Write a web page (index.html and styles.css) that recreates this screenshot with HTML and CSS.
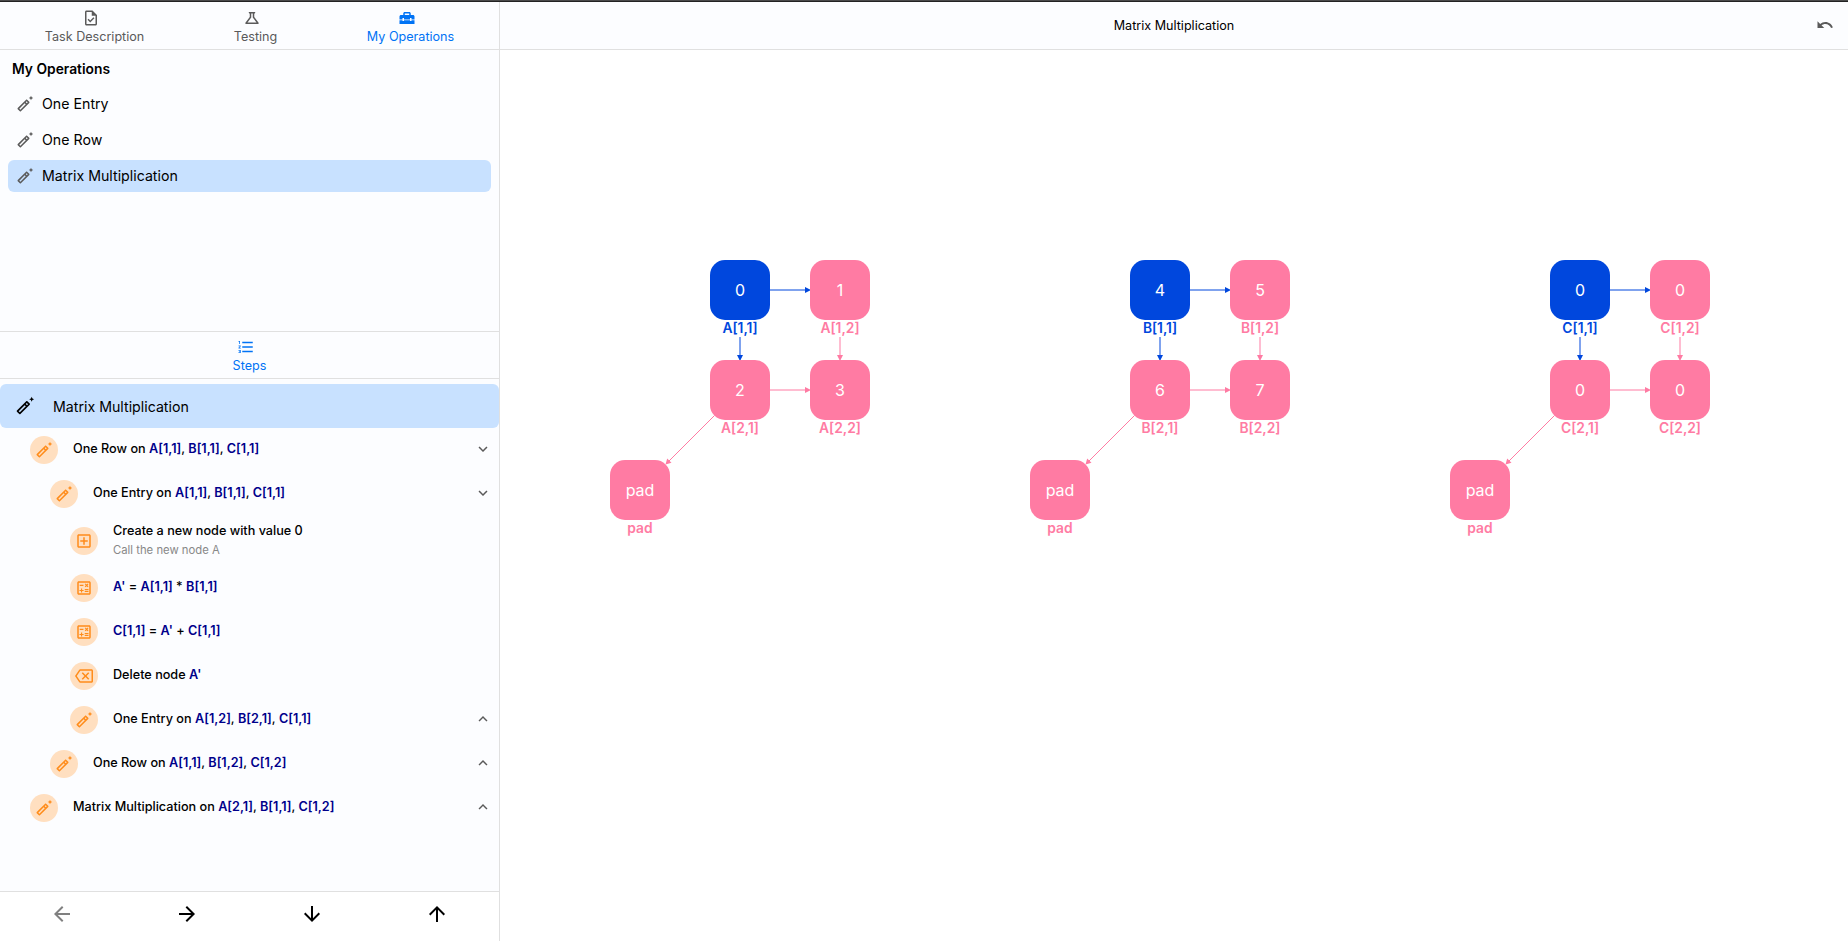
FILE: index.html
```
<!DOCTYPE html>
<html lang="en">
<head>
<meta charset="utf-8">
<title>Matrix Multiplication</title>
<link rel="stylesheet" href="styles.css">
</head>
<body>
<svg class="sprite" aria-hidden="true">
  <symbol id="task" viewBox="0 0 24 24"><path d="M14 2H6c-1.1 0-1.99.9-1.99 2L4 20c0 1.1.89 2 1.99 2H18c1.1 0 2-.9 2-2V8l-6-6zm4 18H6V4h7v5h5v11zm-9.18-6.95L7.4 14.46 10.94 18l5.66-5.66-1.41-1.41-4.24 4.24-2.13-2.12z"/></symbol>
  <symbol id="flask" viewBox="0 0 24 24"><path d="M13 11.33L18 18H6l5-6.67V6h2m2.96-2H8.04c-.42 0-.65.48-.39.81L9 6.5v4.17L3.2 18.4c-.49.66-.02 1.6.8 1.6h16c.82 0 1.29-.94.8-1.6L15 10.67V6.5l1.35-1.69c.26-.33.03-.81-.39-.81z"/></symbol>
  <symbol id="toolbox" viewBox="0 0 24 24"><path d="M18 16h-2v-1H8v1H6v-1H2v5h20v-5h-4v1zM20 8h-3V6c0-1.1-.9-2-2-2H9c-1.1 0-2 .9-2 2v2H4c-1.1 0-2 .9-2 2v4h4v-2h2v2h8v-2h2v2h4v-4c0-1.1-.9-2-2-2zm-5 0H9V6h6v2z"/></symbol>
  <symbol id="wand" viewBox="0 0 24 24"><path d="m20 7 .94-2.06L23 4l-2.06-.94L20 1l-.94 2.06L17 4l2.06.94zM17.71 9.12l-2.83-2.83C14.68 6.1 14.43 6 14.17 6c-.26 0-.51.1-.71.29L2.29 17.46c-.39.39-.39 1.02 0 1.41l2.83 2.83c.2.2.45.3.71.3s.51-.1.71-.29l11.17-11.17c.39-.39.39-1.03 0-1.42zm-3.54-.7 1.41 1.41L14.41 11 13 9.59l1.17-1.17zM5.83 19.59l-1.41-1.41L11.59 11 13 12.41l-7.17 7.18z"/></symbol>
  <symbol id="list" viewBox="0 0 24 24"><path d="M2 17h2v.5H3v1h1v.5H2v1h3v-4H2v1zm1-9h1V4H2v1h1v3zm-1 3h1.8L2 13.1v.9h3v-1H3.2L5 10.9V10H2v1zm5-6v2h14V5H7zm0 14h14v-2H7v2zm0-6h14v-2H7v2z"/></symbol>
  <symbol id="add" viewBox="0 0 24 24"><path d="M19 3H5c-1.11 0-2 .9-2 2v14c0 1.1.89 2 2 2h14c1.1 0 2-.9 2-2V5c0-1.1-.9-2-2-2zm0 16H5V5h14v14zm-8-2h2v-4h4v-2h-4V7h-2v4H7v2h4z"/></symbol>
  <symbol id="calc" viewBox="0 0 24 24"><path d="M19 3H5c-1.1 0-2 .9-2 2v14c0 1.1.9 2 2 2h14c1.1 0 2-.9 2-2V5c0-1.1-.9-2-2-2zm0 16H5V5h14v14z"/><path d="M6.25 7.72h5v1.5h-5zM13 15.75h5v1.5h-5zM13 13.25h5v1.5h-5zM8 18h1.5v-2h2v-1.5h-2v-2H8v2H6V16h2zM14.09 10.95l1.41-1.41 1.41 1.41 1.06-1.06-1.41-1.42 1.41-1.41L16.91 6 15.5 7.41 14.09 6l-1.06 1.06 1.41 1.41-1.41 1.42z"/></symbol>
  <symbol id="backspace" viewBox="0 0 24 24"><path d="M22 3H7c-.69 0-1.23.35-1.59.88L0 12l5.41 8.11c.36.53.9.89 1.59.89h15c1.1 0 2-.9 2-2V5c0-1.1-.9-2-2-2zm0 16H7.07L2.4 12l4.66-7H22v14zm-11.59-2L14 13.41 17.59 17 19 15.59 15.41 12 19 8.41 17.59 7 14 10.59 10.41 7 9 8.41 12.59 12 9 15.59z"/></symbol>
  <symbol id="more" viewBox="0 0 24 24"><path d="M16.59 8.59 12 13.17 7.41 8.59 6 10l6 6 6-6z"/></symbol>
  <symbol id="less" viewBox="0 0 24 24"><path d="m12 8-6 6 1.41 1.41L12 10.83l4.59 4.58L18 14z"/></symbol>
  <symbol id="undo" viewBox="0 0 24 24"><path d="M12.5 8c-2.65 0-5.05.99-6.9 2.6L2 7v9h9l-3.62-3.62c1.39-1.16 3.16-1.88 5.12-1.88 3.54 0 6.55 2.31 7.6 5.5l2.37-.78C21.08 11.03 17.15 8 12.5 8z"/></symbol>
  <symbol id="left" viewBox="0 0 24 24"><path d="M20 11H7.83l5.59-5.59L12 4l-8 8 8 8 1.41-1.41L7.83 13H20v-2z"/></symbol>
  <symbol id="right" viewBox="0 0 24 24"><path d="m12 4-1.41 1.41L16.17 11H4v2h12.17l-5.58 5.59L12 20l8-8z"/></symbol>
  <symbol id="down" viewBox="0 0 24 24"><path d="m20 12-1.41-1.41L13 16.17V4h-2v12.17l-5.58-5.59L4 12l8 8 8-8z"/></symbol>
  <symbol id="up" viewBox="0 0 24 24"><path d="m4 12 1.41 1.41L11 7.83V20h2V7.83l5.58 5.59L20 12l-8-8-8 8z"/></symbol>
  <symbol id="edges" viewBox="0 0 300 310">
    <g class="edge-blue"><path class="line" d="M180 50H215M150 97V115"/><path class="tip" d="M221 50l-6 -3v6zM150 121l-3 -6h6z"/></g>
    <g class="edge-pink"><path class="line" d="M180 150H215M250 97V115"/><path class="diag" d="M124.500 175.500L78.500 221.500"/><path class="tip" d="M221 150l-6 -3v6zM250 121l-3 -6h6zM75.500 224.500l1.700 -6 4.300 4.300z"/></g>
  </symbol>
</svg>
<div class="app">
  <aside class="sidebar">
    <nav class="tabs">
      <div class="tab"><svg class="icon"><use href="#task"/></svg><span>Task Description</span></div>
      <div class="tab"><svg class="icon"><use href="#flask"/></svg><span>Testing</span></div>
      <div class="tab active"><svg class="icon"><use href="#toolbox"/></svg><span>My Operations</span></div>
    </nav>
    <section class="operations">
      <h2 class="title">My Operations</h2>
      <div class="operation"><svg class="icon"><use href="#wand"/></svg><span>One Entry</span></div>
      <div class="operation"><svg class="icon"><use href="#wand"/></svg><span>One Row</span></div>
      <div class="operation selected"><svg class="icon"><use href="#wand"/></svg><span>Matrix Multiplication</span></div>
    </section>
    <nav class="tabs steps-tab">
      <div class="tab active"><svg class="icon"><use href="#list"/></svg><span>Steps</span></div>
    </nav>
    <section class="steps">
      <div class="current"><svg class="icon"><use href="#wand"/></svg>Matrix Multiplication</div>
      <div class="step"><i class="dot"><svg class="icon"><use href="#wand"/></svg></i><p class="text">One Row on <b>A[1,1]</b>, <b>B[1,1]</b>, <b>C[1,1]</b></p><svg class="icon chevron"><use href="#more"/></svg></div>
      <div class="step level-2"><i class="dot"><svg class="icon"><use href="#wand"/></svg></i><p class="text">One Entry on <b>A[1,1]</b>, <b>B[1,1]</b>, <b>C[1,1]</b></p><svg class="icon chevron"><use href="#more"/></svg></div>
      <div class="step level-3 tall"><i class="dot"><svg class="icon"><use href="#add"/></svg></i><div class="text"><p>Create a new node with value 0</p><p class="note">Call the new node A</p></div></div>
      <div class="step level-3"><i class="dot"><svg class="icon"><use href="#calc"/></svg></i><p class="text"><b>A'</b> = <b>A[1,1]</b> * <b>B[1,1]</b></p></div>
      <div class="step level-3"><i class="dot"><svg class="icon"><use href="#calc"/></svg></i><p class="text"><b>C[1,1]</b> = <b>A'</b> + <b>C[1,1]</b></p></div>
      <div class="step level-3"><i class="dot"><svg class="icon"><use href="#backspace"/></svg></i><p class="text">Delete node <b>A'</b></p></div>
      <div class="step level-3"><i class="dot"><svg class="icon"><use href="#wand"/></svg></i><p class="text">One Entry on <b>A[1,2]</b>, <b>B[2,1]</b>, <b>C[1,1]</b></p><svg class="icon chevron"><use href="#less"/></svg></div>
      <div class="step level-2"><i class="dot"><svg class="icon"><use href="#wand"/></svg></i><p class="text">One Row on <b>A[1,1]</b>, <b>B[1,2]</b>, <b>C[1,2]</b></p><svg class="icon chevron"><use href="#less"/></svg></div>
      <div class="step"><i class="dot"><svg class="icon"><use href="#wand"/></svg></i><p class="text">Matrix Multiplication on <b>A[2,1]</b>, <b>B[1,1]</b>, <b>C[1,2]</b></p><svg class="icon chevron"><use href="#less"/></svg></div>
    </section>
    <footer class="controls">
      <svg class="icon disabled"><use href="#left"/></svg>
      <svg class="icon"><use href="#right"/></svg>
      <svg class="icon"><use href="#down"/></svg>
      <svg class="icon"><use href="#up"/></svg>
    </footer>
  </aside>
  <main class="main">
    <header class="header"><span>Matrix Multiplication</span><svg class="icon undo"><use href="#undo"/></svg></header>
    <div class="canvas">
      <div class="graph graph-a">
        <svg class="edges"><use href="#edges"/></svg>
        <div class="node n11"><div class="box">0</div><div class="label">A[1,1]</div></div>
        <div class="node n12"><div class="box">1</div><div class="label">A[1,2]</div></div>
        <div class="node n21"><div class="box">2</div><div class="label">A[2,1]</div></div>
        <div class="node n22"><div class="box">3</div><div class="label">A[2,2]</div></div>
        <div class="node pad"><div class="box">pad</div><div class="label">pad</div></div>
      </div>
      <div class="graph graph-b">
        <svg class="edges"><use href="#edges"/></svg>
        <div class="node n11"><div class="box">4</div><div class="label">B[1,1]</div></div>
        <div class="node n12"><div class="box">5</div><div class="label">B[1,2]</div></div>
        <div class="node n21"><div class="box">6</div><div class="label">B[2,1]</div></div>
        <div class="node n22"><div class="box">7</div><div class="label">B[2,2]</div></div>
        <div class="node pad"><div class="box">pad</div><div class="label">pad</div></div>
      </div>
      <div class="graph graph-c">
        <svg class="edges"><use href="#edges"/></svg>
        <div class="node n11"><div class="box">0</div><div class="label">C[1,1]</div></div>
        <div class="node n12"><div class="box">0</div><div class="label">C[1,2]</div></div>
        <div class="node n21"><div class="box">0</div><div class="label">C[2,1]</div></div>
        <div class="node n22"><div class="box">0</div><div class="label">C[2,2]</div></div>
        <div class="node pad"><div class="box">pad</div><div class="label">pad</div></div>
      </div>
    </div>
  </main>
</div>
</body>
</html>
```
FILE: styles.css
```
* { box-sizing: border-box; }
body { margin: 0; font-family: Inter, sans-serif; font-size: 12.6px; color: #000; background: #fff; }
p, h2 { margin: 0; }
.sprite { display: none; }
.icon { display: block; width: 18px; height: 18px; fill: currentColor; flex: none; }

.app { display: flex; height: 941px; border-top: 1px solid #4a4a4a; box-shadow: inset 0 1px #222; padding-top: 1px; overflow: hidden; }
.sidebar { display: flex; flex-direction: column; width: 500px; flex: none; border-right: 1px solid #e0e0e0; background: #fcfdff; }

.tabs { display: flex; justify-content: space-around; height: 48px; flex: none; border-bottom: 1px solid #e0e0e0; color: #5a5a5a; }
.tab { display: flex; flex-direction: column; align-items: center; padding-top: 7px; }
.tab .icon { margin-right: 8px; }
.tab span { line-height: 19px; }
.active { color: #0073f5; }
.steps-tab .tab { padding-top: 6px; }

.operations { height: 281px; flex: none; padding: 9px 8px 0; }
.title { font-size: 13.8px; line-height: 20px; font-weight: 600; padding: 0 4px; margin-bottom: 9px; }
.operation { display: flex; align-items: center; gap: 8px; height: 32px; padding: 0 8px; margin-bottom: 4px; border-radius: 6px; font-size: 14.2px; }
.operation span { padding-bottom: 2px; }
.operation .icon { color: #5a5a5a; }
.selected, .current { background: #c8e1ff; }
.steps-tab { height: 48px; border-top: 1px solid #e0e0e0; }

.steps { flex: 1; padding-top: 5px; }
.current { display: flex; align-items: center; gap: 18px; height: 44px; padding-left: 15px; border-radius: 6px; font-size: 14.2px; }
.current .icon { width: 20px; height: 20px; }
.step { display: flex; align-items: center; height: 44px; padding: 0 7px 0 30px; font-size: 12.65px; font-weight: 500; }
.level-2 { padding-left: 50px; }
.level-3 { padding-left: 70px; }
.tall { height: 50px; }
.dot { display: flex; align-items: center; justify-content: center; width: 28px; height: 28px; margin-right: 15px; border-radius: 50%; background: #ffdfc0; color: #ff8c1a; }
.text { flex: 1; line-height: 18px; padding-bottom: 2px; }
.tall .text { padding-bottom: 0; }
.text b { font-weight: 600; color: #00008b; }
.note { font-size: 11.300px; line-height: 20px; font-weight: 400; color: #888; }
.chevron { color: #5a5a5a; margin-bottom: 2px; }

.controls { display: grid; grid-template-columns: repeat(4, 1fr); justify-items: center; align-items: center; height: 50px; flex: none; padding-bottom: 5px; border-top: 1px solid #e0e0e0; background: #fff; }
.controls .icon { width: 24px; height: 24px; }
.disabled { color: #808080; }

.main { flex: 1; display: flex; flex-direction: column; }
.header { position: relative; display: flex; align-items: center; justify-content: center; height: 48px; padding-bottom: 1px; border-bottom: 1px solid #e0e0e0; background: #fcfdff; }
.undo { position: absolute; right: 14px; top: 14px; color: #5a5a5a; }

.canvas { position: relative; flex: 1; }
.graph { position: absolute; top: 190px; width: 300px; height: 310px; }
.graph-a { left: 90px; }
.graph-b { left: 510px; }
.graph-c { left: 930px; }
.edges { position: absolute; inset: 0; width: 300px; height: 310px; }
.line, .diag { fill: none; stroke-width: 1; }
.edge-blue .line { stroke: #0047dd; }
.edge-pink .line, .edge-pink .diag { stroke: #ff7ba3; }
.edge-blue .tip { fill: #0047dd; }
.edge-pink .tip { fill: #ff7ba3; }
.node { position: absolute; width: 60px; text-align: center; color: #ff7ba3; }
.box { display: flex; align-items: center; justify-content: center; height: 60px; border-radius: 15px; background: #ff7ba3; color: #fff; font-size: 16px; }
.label { font-size: 13.8px; font-weight: 600; line-height: 16px; }
.n11 { left: 120px; top: 20px; color: #0047dd; }
.n11 .box { background: #0047dd; }
.n12 { left: 220px; top: 20px; }
.n21 { left: 120px; top: 120px; }
.n22 { left: 220px; top: 120px; }
.pad { left: 20px; top: 220px; }
```
